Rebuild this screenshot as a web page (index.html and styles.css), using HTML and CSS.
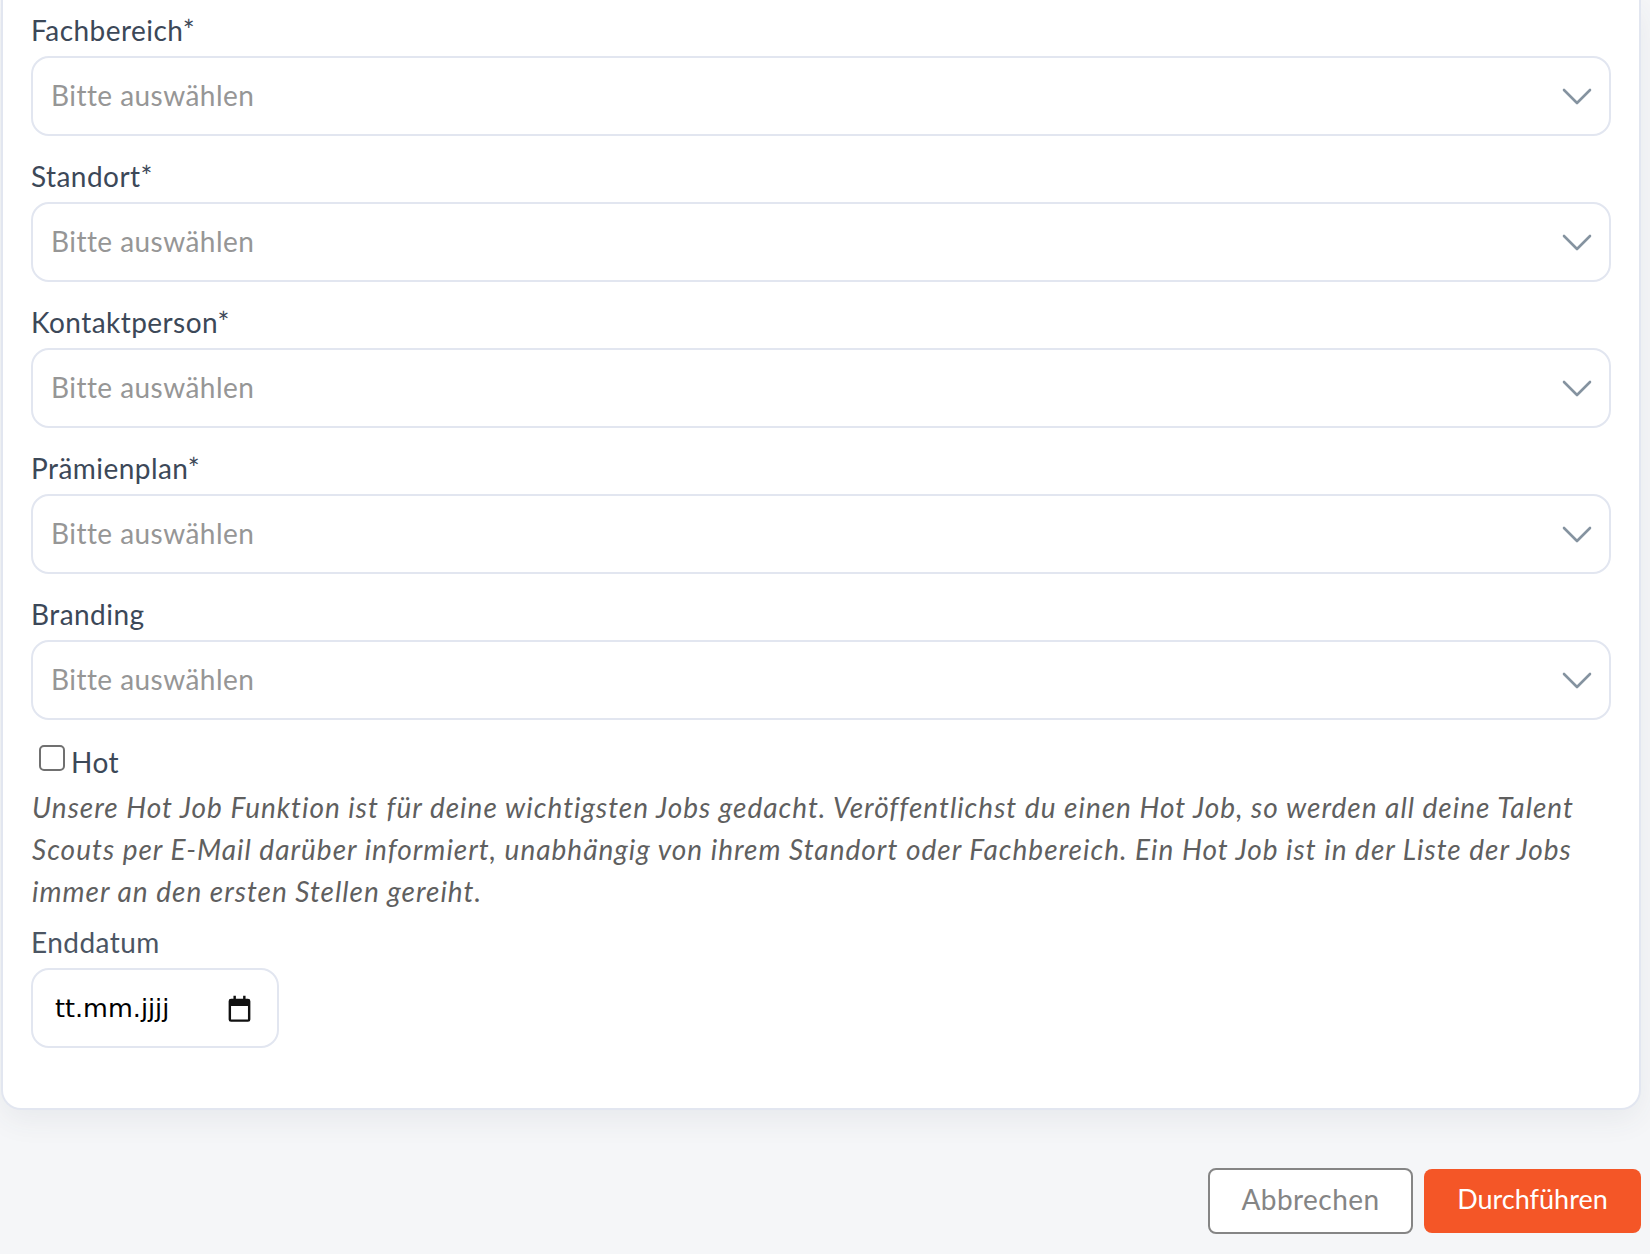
FILE: index.html
```html
<!DOCTYPE html>
<html lang="de">
<head>
<meta charset="utf-8">
<title>Job</title>
<link rel="stylesheet" href="styles.css">
</head>
<body>
<main class="page">
  <form class="card">
    <div class="field">
      <label class="label">Fachbereich*</label>
      <div class="select"><span>Bitte auswählen</span><svg class="chevron" viewBox="0 0 30 17"><path d="M2 2l13 13L28 2"/></svg></div>
    </div>
    <div class="field">
      <label class="label">Standort*</label>
      <div class="select"><span>Bitte auswählen</span><svg class="chevron" viewBox="0 0 30 17"><path d="M2 2l13 13L28 2"/></svg></div>
    </div>
    <div class="field">
      <label class="label">Kontaktperson*</label>
      <div class="select"><span>Bitte auswählen</span><svg class="chevron" viewBox="0 0 30 17"><path d="M2 2l13 13L28 2"/></svg></div>
    </div>
    <div class="field">
      <label class="label">Prämienplan*</label>
      <div class="select"><span>Bitte auswählen</span><svg class="chevron" viewBox="0 0 30 17"><path d="M2 2l13 13L28 2"/></svg></div>
    </div>
    <div class="field">
      <label class="label">Branding</label>
      <div class="select"><span>Bitte auswählen</span><svg class="chevron" viewBox="0 0 30 17"><path d="M2 2l13 13L28 2"/></svg></div>
    </div>
    <label class="check"><input type="checkbox" class="box"><span>Hot</span></label>
    <p class="hint">Unsere Hot Job Funktion ist für deine wichtigsten Jobs gedacht. Veröffentlichst du einen Hot Job, so werden all deine Talent Scouts per E-Mail darüber informiert, unabhängig von ihrem Standort oder Fachbereich. Ein Hot Job ist in der Liste der Jobs immer an den ersten Stellen gereiht.</p>
    <label class="label label-date">Enddatum</label>
    <div class="date"><span>tt.mm.jjjj</span><svg class="cal" viewBox="0 0 24 24"><path d="M5 4h2V1.500h2V4h6V1.500h2V4h2a2 2 0 0 1 2 2v15a2 2 0 0 1-2 2H5a2 2 0 0 1-2-2V6a2 2 0 0 1 2-2zm0 6v11h14V10H5z"/></svg></div>
  </form>
  <div class="actions">
    <button type="button" class="btn btn-cancel">Abbrechen</button>
    <button type="button" class="btn btn-go">Durchführen</button>
  </div>
</main>
</body>
</html>
```
FILE: styles.css
```css
* { box-sizing: border-box; }
html, body { margin: 0; padding: 0; }
body {
  background: #f5f6f8;
  font-family: "Lato", "Open Sans", sans-serif;
  font-size: 28px;
  letter-spacing: .45px;
  line-height: 42px;
  color: #3c4858;
  height: 1254px;
  overflow: hidden;
}
.page { padding-left: 1px; padding-right: 9px; }
.card {
  background: #fff;
  border: 2px solid #e2e6f0;
  border-top: none;
  border-radius: 0 0 20px 20px;
  box-shadow: 0 10px 30px rgba(60, 72, 88, .07);
  padding: 9px 28px 60px;
}
.field { margin-bottom: 19px; }
.label { display: block; height: 42px; margin-bottom: 5px; }
.select {
  height: 80px;
  border: 2px solid #e2e6f0;
  border-radius: 18px;
  background: #fff;
  display: flex;
  align-items: center;
  justify-content: space-between;
  padding: 0 17px 2px 18px;
  color: #969696;
}
.chevron { width: 30px; height: 17px; margin-top: 2px; fill: none; stroke: #8593a0; stroke-width: 2.600; stroke-linecap: round; stroke-linejoin: round; }
.check { display: flex; align-items: center; height: 42px; margin-top: 21px; padding-left: 8px; }
.box {
  appearance: none;
  width: 26px;
  height: 26px;
  margin: 0 6px 8px 0;
  border: 2px solid #707070;
  border-radius: 5px;
  background: #fff;
}
.hint { margin: 3px 0 0; padding-left: 1px; font-style: italic; color: #5f5f5f; letter-spacing: 1px; }
.label-date { margin-top: 9px; margin-bottom: 5px; color: #4b5563; }
.date {
  width: 248px;
  height: 80px;
  border: 2px solid #e2e6f0;
  border-radius: 18px;
  display: flex;
  align-items: center;
  justify-content: space-between;
  padding: 0 23px 0 22px;
  color: #000;
  font-family: "DejaVu Sans", sans-serif;
  font-size: 25.500px;
  letter-spacing: 0;
}
.cal { width: 29px; height: 29px; fill: #111; }
.actions { display: flex; justify-content: flex-end; align-items: center; gap: 11px; margin-top: 58px; }
.btn { font: inherit; letter-spacing: inherit; border-radius: 8px; display: block; padding: 0 0 5px; }
.btn-cancel { width: 205px; height: 66px; background: #fff; border: 2px solid #858585; color: #858585; }
.btn-go { width: 217px; height: 64px; background: #f45627; border: none; color: #fff; font-size: 27px; letter-spacing: 0; }
```
